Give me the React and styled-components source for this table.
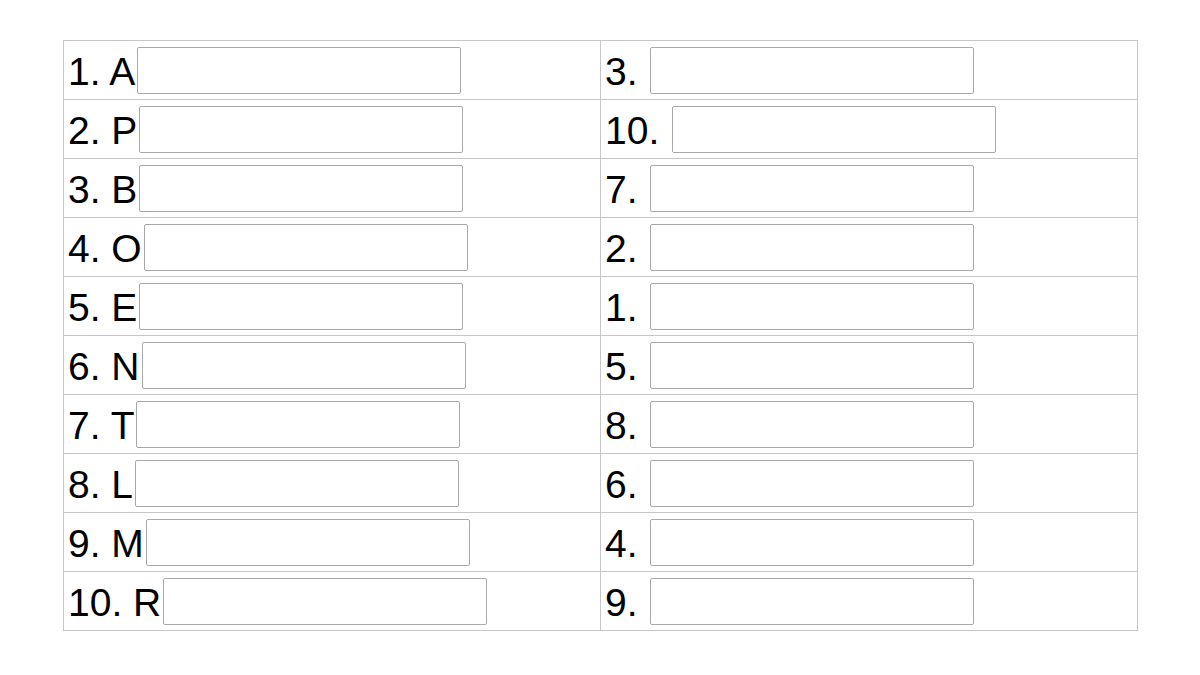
import styled, { createGlobalStyle } from "styled-components";

const GlobalStyle = createGlobalStyle`
  html, body {
    margin: 0;
    padding: 0;
    background: #ffffff;
  }
  body {
    font-family: "Liberation Sans", Arial, sans-serif;
    color: #000000;
  }
`;

const leftItems = ["1. A", "2. P", "3. B", "4. O", "5. E", "6. N", "7. T", "8. L", "9. M", "10. R"];
const rightItems = ["3. ", "10. ", "7. ", "2. ", "1. ", "5. ", "8. ", "6. ", "4. ", "9. "];

function App() {
  return (
    <Page>
      <GlobalStyle />
      <Sheet>
        <tbody>
          {leftItems.map((label, i) => (
            <tr key={label}>
              <Cell>
                <Entry>
                  <Label>{label}</Label>
                  <Blank type="text" />
                </Entry>
              </Cell>
              <Cell>
                <Entry>
                  <Label>{rightItems[i]}</Label>
                  <Blank type="text" />
                </Entry>
              </Cell>
            </tr>
          ))}
        </tbody>
      </Sheet>
    </Page>
  );
}

const Page = styled.div`
  padding: 40px 0 0 63px;
`;

const Sheet = styled.table`
  width: 1075px;
  border-collapse: collapse;
  table-layout: fixed;
`;

const Cell = styled.td`
  border: 1px solid #c6c6c6;
  padding: 0 4px;
  width: 50%;
`;

const Entry = styled.div`
  display: flex;
  align-items: center;
  height: 58px;
`;

const Label = styled.span`
  font-size: 39px;
  line-height: 1;
  white-space: pre;
  padding-top: 3px;
`;

const Blank = styled.input`
  box-sizing: border-box;
  width: 324px;
  height: 47px;
  margin: 0 0 0 2px;
  border: 1px solid #a8a8a8;
  border-radius: 2px;
  background: #ffffff;
  outline: none;
`;

export default App;
